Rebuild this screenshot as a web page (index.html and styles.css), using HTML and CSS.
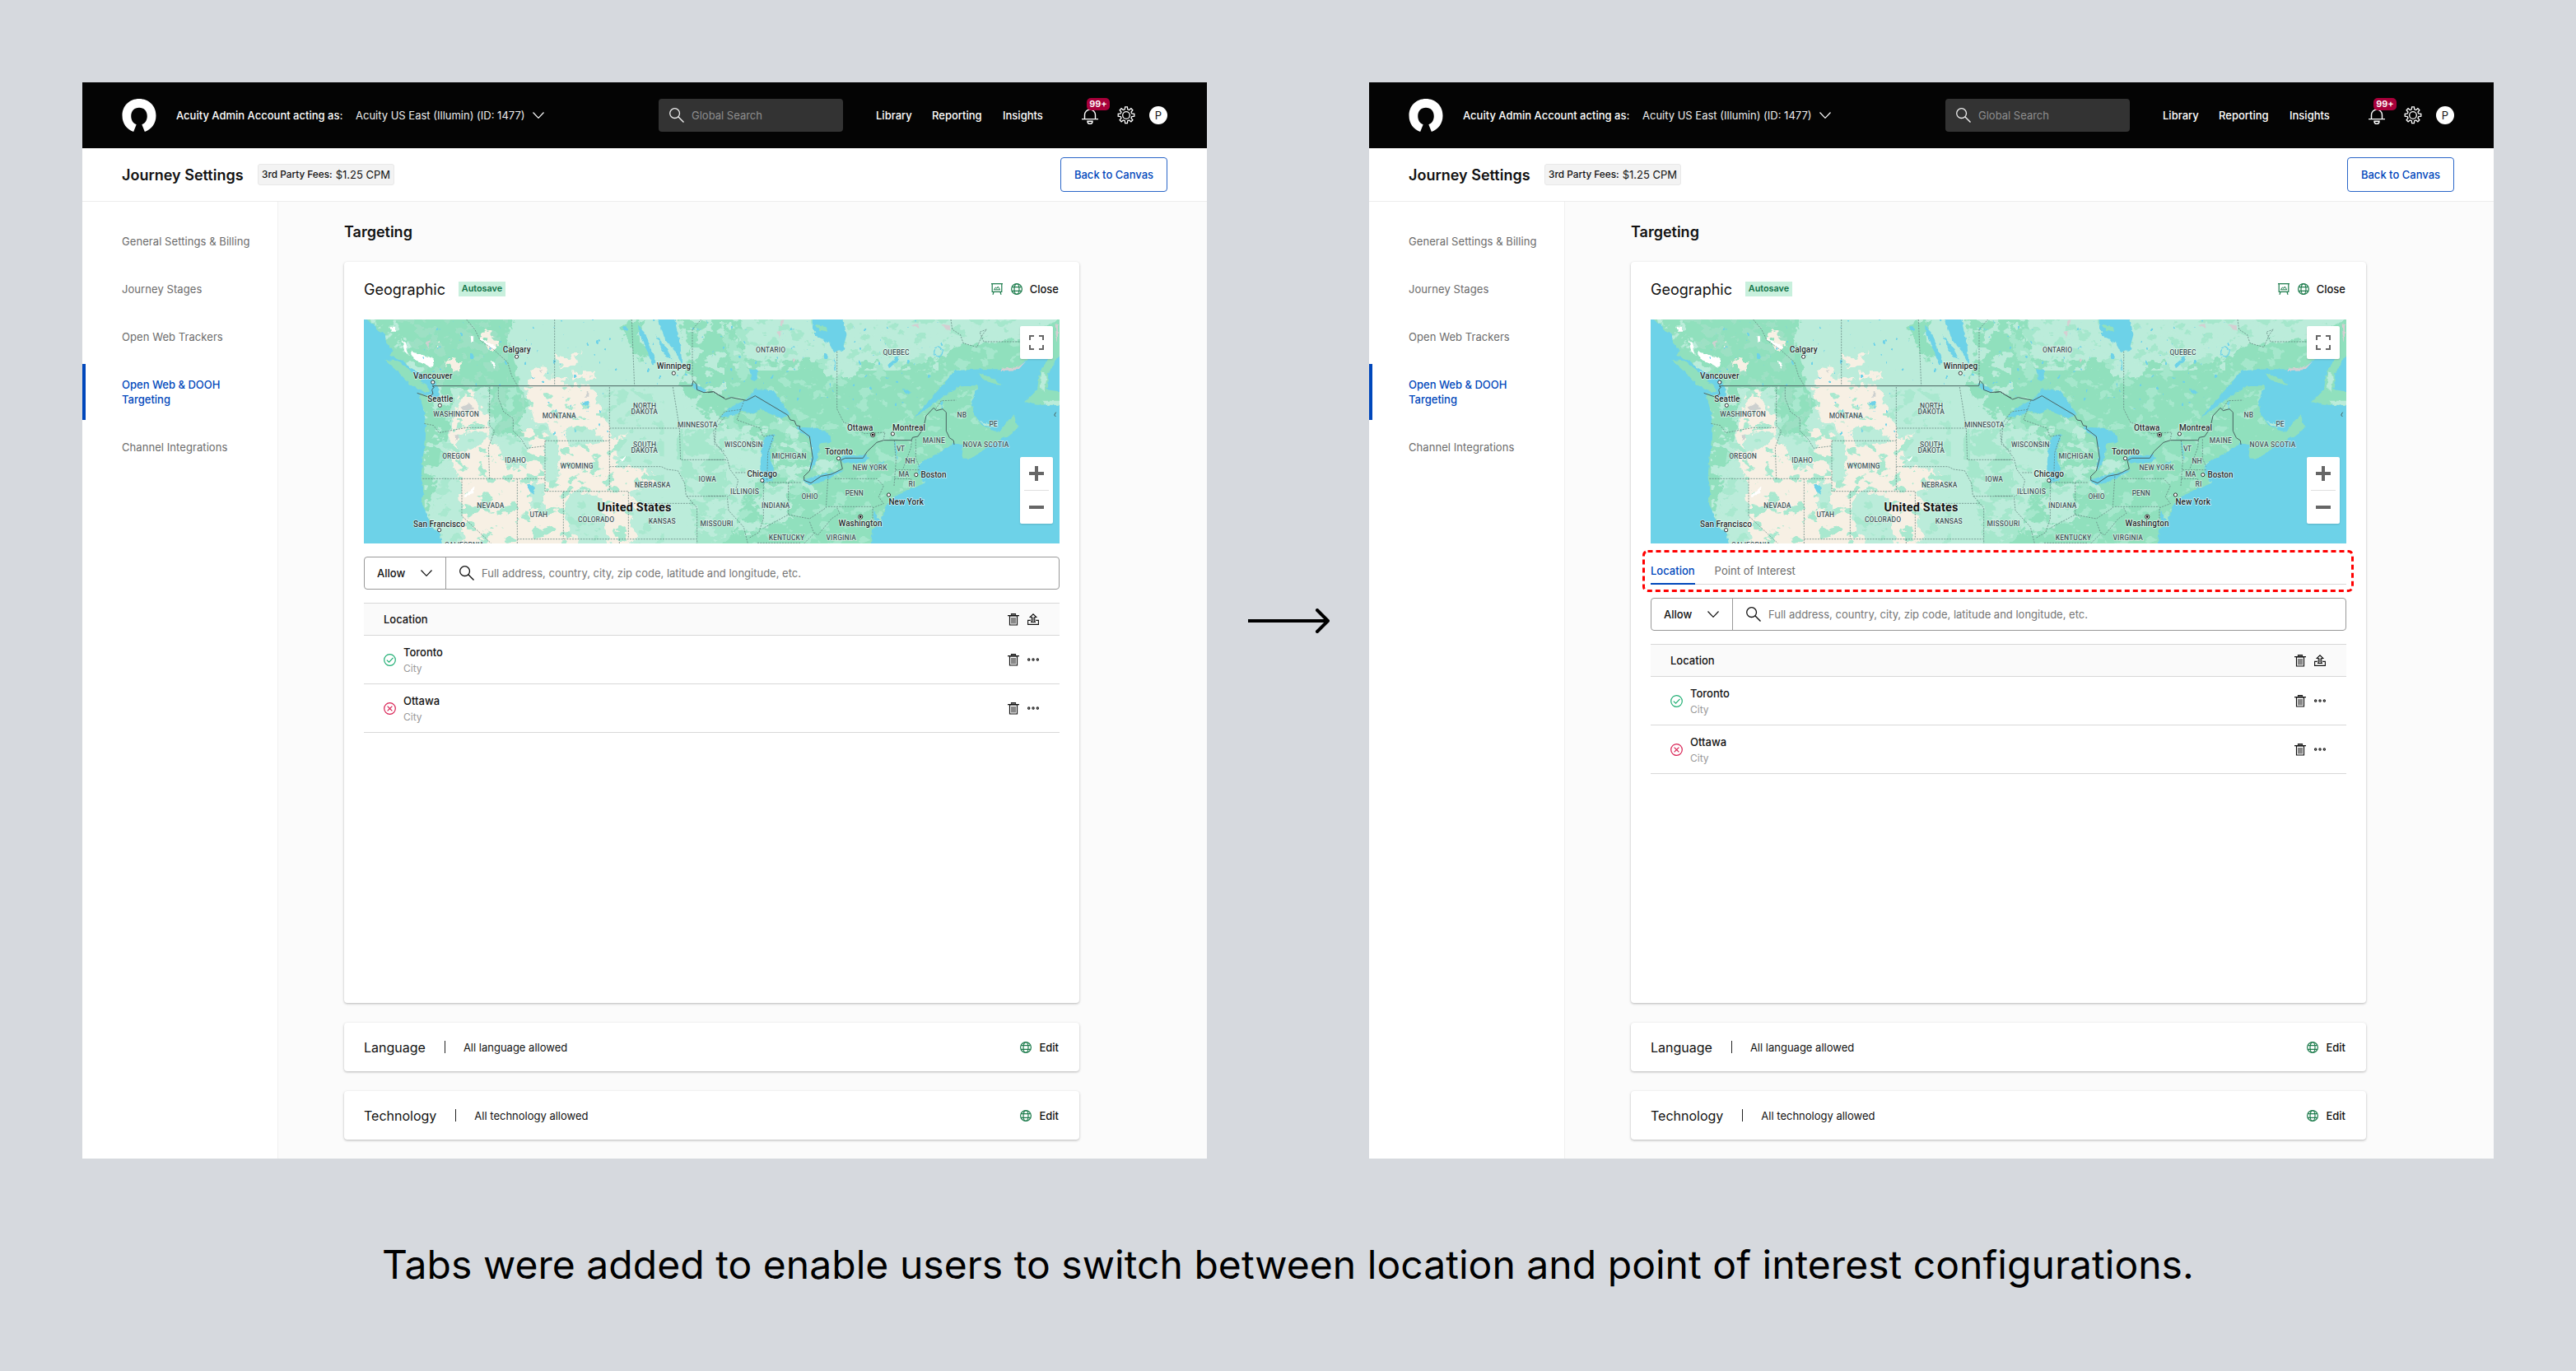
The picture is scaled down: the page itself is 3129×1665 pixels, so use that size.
FILE: index.html
```html
<!DOCTYPE html>
<html lang="en">
<head>
<meta charset="utf-8">
<title>Journey Settings – Targeting</title>
<link rel="stylesheet" href="styles.css">
</head>
<body>
<svg class="sprite" width="0" height="0" aria-hidden="true">
  <defs>
    <filter id="coast" x="-5%" y="-5%" width="110%" height="110%" color-interpolation-filters="sRGB">
      <feTurbulence type="fractalNoise" baseFrequency=".035" numOctaves="3" seed="4" result="n"/>
      <feDisplacementMap in="SourceGraphic" in2="n" scale="50" xChannelSelector="R" yChannelSelector="G"/>
    </filter>
    <filter id="shore" x="-5%" y="-5%" width="110%" height="110%" color-interpolation-filters="sRGB">
      <feTurbulence type="fractalNoise" baseFrequency=".06" numOctaves="2" seed="9" result="n"/>
      <feDisplacementMap in="SourceGraphic" in2="n" scale="14" xChannelSelector="R" yChannelSelector="G"/>
    </filter>
    <filter id="patchA" x="0" y="0" width="100%" height="100%" color-interpolation-filters="sRGB">
      <feTurbulence type="fractalNoise" baseFrequency=".018 .024" numOctaves="4" seed="7"/>
      <feColorMatrix values="0 0 0 0 0  0 0 0 0 0  0 0 0 0 0  24 0 0 0 -13.2" result="m"/>
      <feComposite in="SourceGraphic" in2="m" operator="in"/>
    </filter>
    <filter id="patchB" x="0" y="0" width="100%" height="100%" color-interpolation-filters="sRGB">
      <feTurbulence type="fractalNoise" baseFrequency=".02 .026" numOctaves="4" seed="21"/>
      <feColorMatrix values="0 0 0 0 0  0 0 0 0 0  0 0 0 0 0  24 0 0 0 -14.2" result="m"/>
      <feComposite in="SourceGraphic" in2="m" operator="in"/>
    </filter>
    <filter id="specks" x="0" y="0" width="100%" height="100%" color-interpolation-filters="sRGB">
      <feTurbulence type="fractalNoise" baseFrequency=".05 .04" numOctaves="2" seed="3"/>
      <feColorMatrix values="0 0 0 0 0  0 0 0 0 0  0 0 0 0 0  30 0 0 0 -22.4" result="m"/>
      <feComposite in="SourceGraphic" in2="m" operator="in"/>
    </filter>
  </defs>

  <symbol id="i-logo" viewBox="0 0 42 42"><path d="M14 41C5.500 38 0 30.500 0 21 0 8.500 9 0 21 0s21 8.500 21 21c0 9.500-5.500 17-14 20l-3.600-9C28.500 30.500 31 26.500 31 21.500c0-6.500-4-10.500-10-10.500s-10 4-10 10.500c0 5 2.500 9 6.600 10.500z" fill="#fff"/></symbol>
  <symbol id="i-chev" viewBox="0 0 14 8"><path d="M.5.5 7 7.300 13.500.5" fill="none" stroke="currentColor" stroke-width="1.200"/></symbol>
  <symbol id="i-search" viewBox="0 0 18 18"><circle cx="6.600" cy="6.600" r="5.900" fill="none" stroke="currentColor" stroke-width="1.300"/><path d="m10.800 10.800 6.700 6.700" stroke="currentColor" stroke-width="1.400"/></symbol>
  <symbol id="i-bell" viewBox="0 0 20 19"><path d="M0 12.600h20M3.500 12.500V7.500a6.500 6.500 0 0 1 13 0v5M7 15.200c0 4.200 6 4.200 6 0z" fill="none" stroke="currentColor" stroke-width="1.400"/></symbol>
  <symbol id="i-gear" viewBox="0 0 22 22"><g fill="none" stroke="currentColor" stroke-width="1.300"><circle cx="11" cy="11" r="4.300"/><path d="M9.300 3.800 9.600.8h2.800l.3 3 1.900.8 2.300-1.900 2 2L17 7.100l.8 1.900 3 .3v2.900l-3 .3-.8 1.900 1.900 2.400-2 2-2.300-1.900-1.900.8-.3 3H9.600l-.3-3-1.900-.8-2.300 1.900-2-2L5 14.400l-.8-1.900-3-.3V9.300l3-.3.8-1.900-1.900-2.400 2-2 2.300 1.900z"/></g></symbol>
  <symbol id="i-globe" viewBox="0 0 14 14"><g fill="none" stroke="#1f7d4e" stroke-width="1.200"><circle cx="7" cy="7" r="6.400"/><ellipse cx="7" cy="7" rx="3" ry="6.400"/><path d="M1.200 4.700h11.600M1.200 9.300h11.600"/></g></symbol>
  <symbol id="i-board" viewBox="0 0 14 14"><path d="M1.200.6h11.600v9.800H1.200zM0 .6h14M3 10.500 2 13.800M11 10.500l1 3.300" fill="none" stroke="#1f7d4e" stroke-width="1.200"/><path d="M3.400 7.800 5.400 5l1.500 1.300L8.300 4l2.400 3.800z" fill="none" stroke="#1f7d4e"/></symbol>
  <symbol id="i-trash" viewBox="0 0 14 15"><path d="M4 5h6v7.500H4z" fill="#888"/><path d="M0 2.600h14M4.500 2.300V.7h5v1.600M2.500 3v11h9V3" fill="none" stroke="#111" stroke-width="1.200"/><path d="M3 3.500h8M4.500 1.500h5" stroke="#777"/></symbol>
  <symbol id="i-upload" viewBox="0 0 14 14"><path d="M5.500 4.500h3v4.500h-3z" fill="#888"/><path d="M3.800 8.400H.6v5h12.800v-5h-3.200M4 10.400h6M5.200 10V4.500H3.200L7 .8l3.800 3.700H8.800V10" fill="none" stroke="#111" stroke-width="1.100"/></symbol>
  <symbol id="i-dots" viewBox="0 0 14 4"><g fill="none" stroke="#111" stroke-width="1.100"><circle cx="1.700" cy="2" r="1.150"/><circle cx="7" cy="2" r="1.150"/><circle cx="12.300" cy="2" r="1.150"/></g></symbol>
  <symbol id="i-ok" viewBox="0 0 15 15"><g fill="none" stroke="#1fae73" stroke-width="1.200"><circle cx="7.500" cy="7.500" r="6.800"/><path d="m3.800 7.600 2.700 2.600 5-5.400"/></g></symbol>
  <symbol id="i-no" viewBox="0 0 15 15"><g fill="none" stroke="#d81f52" stroke-width="1.200"><circle cx="7.500" cy="7.500" r="6.800"/><path d="m4.600 4.600 5.800 5.800m0-5.800-5.800 5.800"/></g></symbol>

  <symbol id="terrain" viewBox="0 0 845 272">
    <rect width="845" height="272" fill="#bbecda"/>
    <g transform="translate(-12 -18) scale(.33333)">
      <g filter="url(#coast)">
        <path fill="#90e0bd" d="M0 40H585L560 120 585 200 600 300 640 360 600 420 620 500 570 470 520 480 500 400 490 300 400 310 360 300 350 400 345 470 330 560 300 640 270 760 300 810 240 800 230 300z"/>
        <path fill="#90e0bd" d="M960 90 1010 54 1060 60 1030 110 1080 180 1040 210 1010 150zM1190 40H1420V420L1290 410 1220 360 1190 290 1220 200z"/>
        <path fill="#a5e7cc" d="M1180 460 1420 440V890H1250L1230 740 1190 600z"/>
        <path fill="#f7f0e4" d="M625 290H850L880 340 900 390 925 430 930 500 990 460 960 520 950 585 1060 600 1110 650 1000 680 1050 740 1000 760 1030 850 980 890 930 880 900 700 860 690 790 680 760 760 830 880 640 900 400 880 380 640 350 540 350 450 370 400 390 310 430 310 450 370 490 400 490 440 560 600 600 560 650 510 600 470 640 450 700 470 690 560 700 640 740 650 750 500 700 440 660 430 640 360z"/>
        <path fill="#f7f0e4" d="M735 180 790 190 830 170 800 215 750 235zM640 240 690 225 700 265 780 270 740 310 640 310zM790 250 880 255 870 270 800 272zM340 200 390 205 380 260 360 240zM300 140 320 150 325 190 300 170zM460 100 500 95 530 150 490 160z"/>
        <path fill="#bbecda" d="M640 640 700 650 690 760 650 740zM800 700 860 690 890 740 850 830 790 850 780 760zM500 480 590 500 640 600 560 590zM390 460 490 470 470 500 400 540 370 520zM760 460 840 440 920 500 800 520z"/>
        <path fill="#f7f0e4" d="M460 520 520 560 500 620 640 640 620 560 680 520 670 640 560 700 450 640z"/>
      </g>
      <g filter="url(#patchA)"><path fill="#bbecda" d="M60 54H560V300H120zM490 300H620V500H490zM250 300H350V870H260zM1200 54H1400V870H1200z"/></g>
      <g filter="url(#patchB)"><path fill="#a9e8cf" d="M350 300H1130V870H270L300 640z"/></g>
      <g filter="url(#patchA)"><path fill="#7fd3ad" fill-opacity=".5" d="M150 54H560V300H300L260 240zM480 300H620V480H500z"/></g>
      <g filter="url(#shore)">
        <path fill="#6dd2e8" d="M30 40 55 58 90 95 112 105 118 140 140 165 130 185 175 205 215 235 270 262 300 285 312 310 305 345 285 335 235 322 243 345 258 400 262 450 260 500 250 560 245 630 255 680 245 720 270 770 285 810 310 830 330 900H0V40z"/>
        <path fill="#90e0bd" d="M112 202 160 205 200 235 240 275 270 300 280 325 250 315 205 290 165 250z"/>
        <path fill="#6dd2e8" d="M1100 40H1165L1190 150 1195 220 1170 170 1135 130 1120 90zM1035 75 1060 100 1085 170 1100 210 1090 220 1060 150 1040 110zM1100 110 1140 160 1160 200 1130 180zM630 655 655 660 660 695 640 680zM830 355 858 350 850 365 830 365zM1230 285 1290 310 1270 320 1235 305z"/>
        <path fill="#fff" d="M175 125 190 150 200 185 185 175zM205 170 220 175 290 195 285 230 240 210 215 195zM130 80H150V98H135zM400 700 440 660 435 690zM460 120 520 155 500 160 465 130zM425 115H435V135H427zM500 205 515 210 508 235zM970 568 992 550 985 566z"/>
        <path fill="#cdd0cf" d="M262 135 280 130 268 160zM385 375 420 360 445 380 400 385zM845 315H856V335H846zM368 475H380V495H370zM675 240 688 238 682 250z"/>
      </g>
      <g filter="url(#specks)"><path fill="#6dd2e8" d="M150 54H560V300H320zM600 54H1350V300H600zM700 300H930V480H700z"/></g>
    </g>
    <g transform="translate(418 -18) scale(.33333)">
      <g filter="url(#coast)">
        <path fill="#90e0bd" d="M60 30 90 130 130 190 190 210 300 200 400 200 430 260 520 270 580 200 680 230 760 200 830 200 900 150 1000 140 1160 130 1310 30V300L1000 560 680 720 600 900 40 900 100 800 200 560 120 470 60 440 60 400z"/>
        <path fill="#bbecda" d="M60 450 120 450 140 470 190 540 190 640 130 700 100 830 70 760 60 600zM380 570 450 560 480 590 400 620zM200 660 290 650 300 780 200 800zM240 400 340 460 320 500 280 470z"/>
        <path fill="#a5e7cc" d="M640 450 760 400 700 440 660 490 620 490zM60 100 130 160 140 240 80 200z"/>
      </g>
      <g filter="url(#patchA)"><path fill="#bbecda" d="M90 54H840V240H90zM240 500H400V700H240z"/></g>
      <g filter="url(#patchB)"><path fill="#a5e7cc" d="M60 54H1270V600L560 870H60z"/></g>
      <g filter="url(#patchA)"><path fill="#bbecda" d="M60 440H220V870H60zM850 54H1160V130H850z"/></g>
      <g filter="url(#shore)">
        <path fill="#6dd2e8" d="M380 40H490L505 110 490 165 460 175 440 140 400 120 380 85z"/>
        <path fill="#90e0bd" d="M392 72 430 78 435 98 405 92z"/>
        <path fill="#6dd2e8" d="M45 410 90 370 140 345 170 310 235 312 265 350 300 400 270 415 220 395 190 380 160 400 130 385 90 405z"/>
        <path fill="#6dd2e8" d="M205 480 245 475 230 510 225 560 240 600 235 640 200 650 190 590 195 530z"/>
        <path fill="#6dd2e8" d="M320 445 400 450 440 470 450 500 410 505 395 570 370 610 382 540 370 485 335 465z"/>
        <path fill="#6dd2e8" d="M345 640 400 622 495 600 470 620 400 650 370 660zM480 565 500 548 575 548 590 560 565 575 500 578z"/>
        <path fill="#6dd2e8" d="M1310 170 1160 200 1125 235 1000 235 900 240 840 310 790 370 750 410 770 400 850 340 920 295 985 295 960 350 970 400 1000 440 1050 460 1040 470 990 465 960 490 925 510 895 505 860 530 800 560 770 580 765 610 790 650 730 675 665 700 690 690 650 730 630 790 600 820 590 900H1310z"/>
        <path fill="#90e0bd" d="M985 450 1060 465 1090 430 1115 400 1120 420 1130 450 1090 480 1030 510 960 560 925 560 930 510zM985 250 1020 262 1070 290 1040 288 1000 270zM1270 60 1310 60V365L1200 365 1155 355 1200 310 1210 240 1240 200 1250 150 1225 170 1170 190 1190 100z"/>
        <path fill="#6dd2e8" d="M1240 250 1310 130V320L1235 310z"/>
        <path fill="#bbecda" d="M990 425 1040 440 1060 432 1050 447 1010 440zM1215 240 1235 260 1225 320 1212 300zM1220 350H1300V365H1230z"/>
        <path fill="#6dd2e8" d="M655 220 700 180 690 205 660 232zM150 235 180 240 178 280 160 275zM600 745 610 760 625 790 618 800 605 775zM710 305 740 318 735 330 715 320z"/>
        <path fill="none" stroke="#6dd2e8" stroke-width="4" d="M838 155c-20 5-18 30 0 34 20-2 22-28 2-34M600 600 640 570M680 500 690 560M460 200 465 240"/>
        <path fill="#d5cfd2" d="M262 60 278 58 270 80zM250 100 266 95 260 122zM306 195 320 200 312 215zM740 72 770 70 768 86zM850 72 880 75 885 95 860 85zM1265 70 1275 72V140L1268 110zM1070 233 1130 228 1160 205 1130 238 1070 240z"/>
      </g>
      <g filter="url(#specks)"><path fill="#6dd2e8" d="M60 54H860V380H60z"/></g>
    </g>
    <g fill="none" stroke="#5f7f7a" stroke-width="2.200" stroke-dasharray="6 4" transform="translate(-12 -18) scale(.33333)">
      <path d="M410 54 440 90 460 130 510 165 560 210 575 260 595 294M731 54V296M1012 54 1022 296M1233 275V90L1265 54M494 300V440L512 460 490 520 494 634M526 300V340L545 390 580 415V460L610 490 630 523 694 515M256 433 290 440 310 467 345 460 410 448H494M250 634H696M696 496V680H1000V852M696 496H931M931 300V680M931 450H1186M931 590H1120L1140 600 1180 605 1205 650 1210 695 1250 740V852M1162 300 1175 380 1186 450 1190 565H1350M1212 698H1350M1000 724H1235M393 634V770L500 870M595 634V870M763 680V854M595 854H1250V870M967 854V870M1350 410 1310 460 1315 510 1350 535"/>
    </g>
    <g fill="none" stroke="#5f7f7a" stroke-width="2.200" stroke-dasharray="6 4" transform="translate(418 -18) scale(.33333)">
      <path d="M132 348 105 420 190 450 200 480 240 475 218 540 215 640M120 382 60 390 30 430 25 500 70 560 80 600 110 640 100 680 70 700 75 750 130 810 145 870M0 565H70M100 612H140M0 697H70M202 645V780L185 830 150 850M202 648H340M293 648V765L200 815M293 765 370 780 430 740 438 620M438 736H600M470 170V380L495 430 520 435 570 470 645 465 640 490M462 634H615L640 660 622 700 640 725 600 740V790M470 740 480 760 450 780 400 840 385 830 370 790M390 830 350 870M679 495 685 570 678 660M742 495 740 520 710 600M757 490V560L770 590M684 602H770M680 634H740V665M885 54 890 90 920 110 930 140 980 155 1000 110 1015 90 990 100 1005 135H1140M830 380 850 350 905 348M180 868H340"/>
    </g>
    <g fill="none" stroke="#49615f" stroke-width="3" transform="translate(-12 -18) scale(.33333)">
      <path d="M230 322 270 336 288 325 284 310 292 300 285 296H1232L1236 277 1248 290 1250 310 1275 320 1310 317 1330 330 1350 340"/>
    </g>
    <g fill="none" stroke="#49615f" stroke-width="3" transform="translate(418 -18) scale(.33333)">
      <path d="M0 320 20 317 40 330 65 345 85 338 140 349 172 332 290 402 300 420 315 423 322 440 335 443 333 452 370 480 382 560 370 606 350 625 350 640 375 650 412 625 450 618 490 598 483 567 500 559H565L580 535 615 502 640 494H742L745 484 765 480 775 465 785 450 795 405 822 376 832 386 855 380 868 392V460L880 485 895 495 897 510M1268 392 1262 402 1267 408"/>
    </g>
  </symbol>
</svg>

<main class="board">
  <div class="compare">
    <section class="panel">
      <header class="topbar">
        <svg class="logo"><use href="#i-logo"/></svg>
        <span class="acting">Acuity Admin Account acting as:</span>
        <span class="account">Acuity US East (Illumin) (ID: 1477)</span>
        <svg class="chev"><use href="#i-chev"/></svg>
        <div class="global-search"><svg class="search-icon"><use href="#i-search"/></svg><span>Global Search</span></div>
        <nav class="links"><a class="l1">Library</a><a class="l2">Reporting</a><a class="l3">Insights</a></nav>
        <div class="bell"><svg><use href="#i-bell"/></svg><span class="count">99+</span></div>
        <svg class="gear"><use href="#i-gear"/></svg>
        <span class="avatar">P</span>
      </header>
      <div class="subheader">
        <h1>Journey Settings</h1>
        <div class="fees"><b>3rd Party Fees:</b><span>$1.25 CPM</span></div>
        <a class="back">Back to Canvas</a>
      </div>
      <div class="body">
        <nav class="side">
          <a>General Settings &amp; Billing</a><a>Journey Stages</a><a>Open Web Trackers</a>
          <a class="active">Open Web &amp; DOOH<br>Targeting</a><a>Channel Integrations</a>
        </nav>
        <div class="content">
          <h2>Targeting</h2>
          <article class="card geo">
            <div class="geo-head">
              <h3>Geographic</h3><span class="autosave">Autosave</span>
              <svg class="ic14 push"><use href="#i-board"/></svg><svg class="ic14"><use href="#i-globe"/></svg><a>Close</a>
            </div>
            <div class="map">
              <svg class="map-art" viewBox="0 0 845 272"><use href="#terrain" width="845" height="272"/><g class="map-labels"></g></svg>
              <div class="full"><svg viewBox="0 0 18 18"><path d="M1 6V1h5M12 1h5v5M17 12v5h-5M6 17H1v-5" fill="none" stroke="#666" stroke-width="2"/></svg></div>
              <div class="zoomer"><svg viewBox="0 0 18 18"><path d="M0 9h18M9 0v18" stroke="#666" stroke-width="4"/></svg><i></i><svg viewBox="0 0 18 18"><path d="M0 9h18" stroke="#666" stroke-width="4"/></svg></div>
            </div>
            <div class="field">
              <div class="mode"><span>Allow</span><svg class="chev"><use href="#i-chev"/></svg></div>
              <svg class="search-icon"><use href="#i-search"/></svg><span class="ph">Full address, country, city, zip code, latitude and longitude, etc.</span>
            </div>
            <div class="table">
              <div class="thead"><span>Location</span><svg class="trash push"><use href="#i-trash"/></svg><svg class="ic14"><use href="#i-upload"/></svg></div>
              <div class="row"><svg class="state"><use href="#i-ok"/></svg><div class="place"><b>Toronto</b><small>City</small></div><svg class="trash push"><use href="#i-trash"/></svg><svg class="dots"><use href="#i-dots"/></svg></div>
              <div class="row"><svg class="state"><use href="#i-no"/></svg><div class="place"><b>Ottawa</b><small>City</small></div><svg class="trash push"><use href="#i-trash"/></svg><svg class="dots"><use href="#i-dots"/></svg></div>
            </div>
          </article>
          <article class="card mini"><h3>Language</h3><i></i><p>All language allowed</p><svg class="ic14 push"><use href="#i-globe"/></svg><a>Edit</a></article>
          <article class="card mini"><h3>Technology</h3><i></i><p>All technology allowed</p><svg class="ic14 push"><use href="#i-globe"/></svg><a>Edit</a></article>
        </div>
      </div>
    </section>

    <svg class="arrow" viewBox="0 0 100 30"><path d="M1 15h96" stroke="#000" stroke-width="4"/><path d="M85 2 98 15 85 28" fill="none" stroke="#000" stroke-width="4" stroke-linecap="round" stroke-linejoin="round"/></svg>

    <section class="panel">
      <header class="topbar">
        <svg class="logo"><use href="#i-logo"/></svg>
        <span class="acting">Acuity Admin Account acting as:</span>
        <span class="account">Acuity US East (Illumin) (ID: 1477)</span>
        <svg class="chev"><use href="#i-chev"/></svg>
        <div class="global-search"><svg class="search-icon"><use href="#i-search"/></svg><span>Global Search</span></div>
        <nav class="links"><a class="l1">Library</a><a class="l2">Reporting</a><a class="l3">Insights</a></nav>
        <div class="bell"><svg><use href="#i-bell"/></svg><span class="count">99+</span></div>
        <svg class="gear"><use href="#i-gear"/></svg>
        <span class="avatar">P</span>
      </header>
      <div class="subheader">
        <h1>Journey Settings</h1>
        <div class="fees"><b>3rd Party Fees:</b><span>$1.25 CPM</span></div>
        <a class="back">Back to Canvas</a>
      </div>
      <div class="body">
        <nav class="side">
          <a>General Settings &amp; Billing</a><a>Journey Stages</a><a>Open Web Trackers</a>
          <a class="active">Open Web &amp; DOOH<br>Targeting</a><a>Channel Integrations</a>
        </nav>
        <div class="content">
          <h2>Targeting</h2>
          <article class="card geo">
            <div class="geo-head">
              <h3>Geographic</h3><span class="autosave">Autosave</span>
              <svg class="ic14 push"><use href="#i-board"/></svg><svg class="ic14"><use href="#i-globe"/></svg><a>Close</a>
            </div>
            <div class="map">
              <svg class="map-art" viewBox="0 0 845 272"><use href="#terrain" width="845" height="272"/><g class="map-labels"></g></svg>
              <div class="full"><svg viewBox="0 0 18 18"><path d="M1 6V1h5M12 1h5v5M17 12v5h-5M6 17H1v-5" fill="none" stroke="#666" stroke-width="2"/></svg></div>
              <div class="zoomer"><svg viewBox="0 0 18 18"><path d="M0 9h18M9 0v18" stroke="#666" stroke-width="4"/></svg><i></i><svg viewBox="0 0 18 18"><path d="M0 9h18" stroke="#666" stroke-width="4"/></svg></div>
            </div>
            <div class="tabs">
              <a class="on">Location</a><a>Point of Interest</a>
              <svg class="callout" viewBox="0 0 864 51"><rect x="1.500" y="1.500" width="861" height="48" rx="5" fill="none" stroke="#f00" stroke-width="3" stroke-dasharray="6 4"/></svg>
            </div>
            <div class="field after-tabs">
              <div class="mode"><span>Allow</span><svg class="chev"><use href="#i-chev"/></svg></div>
              <svg class="search-icon"><use href="#i-search"/></svg><span class="ph">Full address, country, city, zip code, latitude and longitude, etc.</span>
            </div>
            <div class="table">
              <div class="thead"><span>Location</span><svg class="trash push"><use href="#i-trash"/></svg><svg class="ic14"><use href="#i-upload"/></svg></div>
              <div class="row"><svg class="state"><use href="#i-ok"/></svg><div class="place"><b>Toronto</b><small>City</small></div><svg class="trash push"><use href="#i-trash"/></svg><svg class="dots"><use href="#i-dots"/></svg></div>
              <div class="row"><svg class="state"><use href="#i-no"/></svg><div class="place"><b>Ottawa</b><small>City</small></div><svg class="trash push"><use href="#i-trash"/></svg><svg class="dots"><use href="#i-dots"/></svg></div>
            </div>
          </article>
          <article class="card mini"><h3>Language</h3><i></i><p>All language allowed</p><svg class="ic14 push"><use href="#i-globe"/></svg><a>Edit</a></article>
          <article class="card mini"><h3>Technology</h3><i></i><p>All technology allowed</p><svg class="ic14 push"><use href="#i-globe"/></svg><a>Edit</a></article>
        </div>
      </div>
    </section>
  </div>
  <p class="caption">Tabs were added to enable users to switch between location and point of interest configurations.</p>
</main>
<script src="script.js"></script>
</body>
</html>
```

FILE: script.js
```js
// Map labels: [text, left, baseline, width] in map pixels.
const states = [
  ["WASHINGTON", 84.3, 117.5, 55.5], ["OREGON", 95.3, 168.8, 33.5], ["IDAHO", 171.3, 173.5, 25.5], ["MONTANA", 216.7, 119.5, 41],
  ["NORTH", 327, 107.5, 28], ["DAKOTA", 324.5, 114.5, 32.5], ["SOUTH", 327, 154.5, 28], ["DAKOTA", 324.5, 161.5, 32.5],
  ["MINNESOTA", 381, 130.5, 48.5], ["WYOMING", 238.5, 181.3, 40], ["NEBRASKA", 329, 204.3, 43.5], ["IOWA", 406.5, 196.8, 21.5],
  ["NEVADA", 137.3, 229.3, 33], ["UTAH", 201.5, 239.6, 21.5], ["COLORADO", 260, 245.5, 44], ["KANSAS", 345.7, 248.3, 33],
  ["MISSOURI", 408.5, 251.3, 40], ["CALIFORNIA", 98, 276.5, 48],
  ["ONTARIO", 476, 39.8, 36], ["QUEBEC", 630.5, 42.8, 32], ["WISCONSIN", 438, 154.8, 46.5], ["MICHIGAN", 495.5, 168.8, 42],
  ["ILLINOIS", 445, 211.8, 35], ["INDIANA", 483, 228.8, 34.5], ["OHIO", 531.5, 217.5, 20], ["KENTUCKY", 491.7, 267.5, 43.5],
  ["NEW YORK", 593.5, 182.9, 42], ["PENN", 584.7, 213.8, 22], ["VIRGINIA", 561.5, 267.5, 36.5], ["VT", 647, 159.6, 10],
  ["NH", 657.5, 174.9, 12], ["MA", 649.5, 191.1, 13], ["RI", 661.5, 202.9, 8], ["MAINE", 678.7, 150.3, 27], ["NB", 720.5, 119.3, 11.5],
  ["PE", 759.5, 130.3, 10], ["NOVA SCOTIA", 727.5, 154.8, 56]
];
// City labels: [text, left, baseline, width, dot x, dot y, is capital].
const cities = [
  ["Calgary", 168.7, 40, 34, 185.6, 45.2], ["Vancouver", 60, 71.5, 47.5, 83.8, 76.2], ["Seattle", 77.3, 100, 31, 92.3, 104.3],
  ["Winnipeg", 355.7, 60, 41.5, 376.3, 65.2], ["San Francisco", 60, 251.7, 63, 91.6, 255.7],
  ["Ottawa", 587, 135, 31.5, 618.2, 140, 1], ["Montreal", 642, 134.6, 40, 642.4, 138.9],
  ["Toronto", 560, 163.6, 34, 576.5, 168.7], ["Chicago", 465.5, 190.5, 36.5, 483.8, 195.5],
  ["Boston", 676.5, 191.6, 31, 670.8, 188.6], ["New York", 637.5, 224.5, 42.5, 637.5, 213],
  ["Washington", 576.5, 250.8, 53, 603.2, 239.6, 1]
];

const NS = "http://www.w3.org/2000/svg";
function add(parent, tag, attrs, text) {
  const el = document.createElementNS(NS, tag);
  for (const k in attrs) el.setAttribute(k, attrs[k]);
  if (text) el.textContent = text;
  parent.appendChild(el);
}
document.querySelectorAll(".map-labels").forEach(g => {
  states.forEach(([t, x, y, w]) => add(g, "text", { class: "st", x, y, textLength: w }, t));
  cities.forEach(([t, x, y, w, cx, cy, capital]) => {
    add(g, "circle", { class: "dot", cx, cy, r: capital ? 2.6 : 2.1 });
    if (capital) add(g, "circle", { cx, cy, r: 1.3 });
    add(g, "text", { class: "city", x, y, textLength: w }, t);
  });
  add(g, "text", { class: "country", x: 283.5, y: 233, textLength: 90 }, "United States");
});
```

FILE: styles.css
```css
* { box-sizing: border-box; }
body { margin: 0; background: #d6d9de; font-family: Inter, "Liberation Sans", sans-serif; color: #111; }
h1, h2, h3, p { margin: 0; font-weight: 400; }
svg { display: block; flex: none; }
.sprite { position: absolute; }
.board { width: 3129px; height: 1665px; padding: 100px 100px 0; overflow: hidden; }
.compare { display: flex; justify-content: space-between; align-items: center; }
.panel { width: 1366px; height: 1307px; background: #fbfbfb; display: flex; flex-direction: column; overflow: hidden; }
.arrow { width: 100px; height: 30px; }
.caption { margin-top: 100px; font-size: 48px; line-height: 58px; letter-spacing: .04px; text-align: center; white-space: nowrap; color: #000; }

.topbar { height: 80px; flex: none; background: #040404; color: #fff; display: flex; align-items: center; padding: 0 48px; font-size: 13px; white-space: nowrap; }
.logo { width: 42px; height: 41px; margin-right: 24px; }
.acting { width: 218px; font-weight: 500; }
.account { width: 215px; color: #eee; }
.chev { width: 14px; height: 8px; }
.global-search { width: 224px; height: 40px; margin-left: 139px; border-radius: 4px; background: #333; color: #8e8e8e; display: flex; align-items: center; padding-left: 13px; gap: 9px; }
.search-icon { width: 18px; height: 18px; }
.global-search .search-icon { color: #eee; }
.links { display: flex; margin-left: 40px; font-weight: 500; }
.l1 { width: 68px; } .l2 { width: 86px; } .l3 { width: 96px; }
.bell { position: relative; width: 20px; }
.bell svg { width: 20px; height: 19px; margin-top: 3px; }
.count { position: absolute; left: 6px; top: -10px; width: 28px; height: 15px; border-radius: 5px; background: #a8003a; font-size: 11px; line-height: 15px; font-weight: 600; text-align: center; }
.gear { width: 22px; height: 22px; margin-left: 23px; }
.avatar { width: 22px; height: 22px; margin-left: 17px; border-radius: 50%; background: #fff; color: #111; font-size: 13px; line-height: 22px; text-align: center; }

.subheader { height: 65px; flex: none; background: #fff; border-bottom: 1px solid #ececec; display: flex; align-items: center; padding: 0 48px 0 48px; }
.subheader h1 { width: 165px; font-size: 18px; font-weight: 600; white-space: nowrap; }
.fees { width: 166px; height: 26px; border: 1px solid #e8e8e8; border-radius: 3px; background: #f3f3f3; display: flex; align-items: center; padding-left: 4px; gap: 4px; font-size: 11.8px; white-space: nowrap; }
.fees b { font-weight: 500; }
.fees span { font-size: 13px; }
.back { margin-left: auto; width: 130px; height: 42px; border: 1px solid #2a66c8; border-radius: 4px; font-size: 13px; font-weight: 500; line-height: 40px; text-align: center; color: #0047bb; white-space: nowrap; }

.body { flex: 1; display: flex; min-height: 0; }
.side { width: 238px; background: #fff; border-right: 1px solid #f0f0f0; padding-top: 23px; display: flex; flex-direction: column; gap: 8px; }
.side a { padding: 16px 0 16px 48px; font-size: 13px; line-height: 18px; letter-spacing: .07px; color: #6b6b6b; white-space: nowrap; }
.side .active { border-left: 4px solid #0047bb; padding-left: 44px; letter-spacing: 0; color: #0047bb; font-weight: 500; }
.content { width: 893px; margin-left: 80px; padding-top: 26px; }
.content h2 { font-size: 18px; line-height: 22px; font-weight: 600; margin-bottom: 25px; }
.card { background: #fff; border-radius: 4px; box-shadow: 0 1px 3px rgba(0,0,0,.28); margin-bottom: 24px; padding: 0 24px; }
.geo { height: 900px; padding-top: 20px; }
.geo-head { height: 26px; margin-bottom: 24px; padding-right: 1px; display: flex; align-items: center; font-size: 13px; }
.geo-head h3 { font-size: 18px; }
.autosave { margin-left: 16px; width: 57px; height: 18px; background: #c8f0dd; color: #0e7245; font-size: 10.8px; line-height: 17px; font-weight: 600; text-align: center; }
.ic14 { width: 14px; height: 14px; }
.push { margin-left: auto; }
.geo-head .ic14 + .ic14 { margin-left: 10px; }
.geo-head a, .mini a { margin-left: 9px; font-size: 13px; font-weight: 500; }
.map { position: relative; height: 272px; width: 845px; overflow: hidden; }
.map-art { width: 845px; height: 272px; font-family: Roboto, sans-serif; }
.map-labels text { paint-order: stroke; stroke-linejoin: round; }
.st { font-size: 8.5px; font-weight: 500; fill: #44565a; stroke: rgba(255,255,255,.6); stroke-width: 1.5px; }
.city { font-size: 10px; font-weight: 500; fill: #222b2b; stroke: rgba(255,255,255,.7); stroke-width: 1.5px; }
.country { font-size: 14.5px; font-weight: 700; fill: #111; stroke: rgba(255,255,255,.7); stroke-width: 1.5px; }
.dot { fill: #fff; stroke: #333; stroke-width: 1px; }
.full, .zoomer { position: absolute; right: 8px; width: 40px; background: #fff; border-radius: 2px; display: flex; flex-direction: column; align-items: center; justify-content: center; box-shadow: 0 1px 2px rgba(0,0,0,.15); }
.full { top: 8px; height: 40px; }
.zoomer { top: 167px; height: 81px; gap: 11px; }
.full svg, .zoomer svg { width: 18px; height: 18px; }
.zoomer i { width: 30px; height: 1px; background: #e0e0e0; }
.tabs { position: relative; width: 845px; height: 34px; margin-top: 16px; border-bottom: 1px solid #d8d8d8; display: flex; gap: 24px; font-size: 13px; line-height: 35px; color: #6b6b6b; }
.tabs a + a { letter-spacing: .06px; }
.tabs .on { color: #0047bb; font-weight: 500; border-bottom: 2px solid #0047bb; height: 34px; }
.callout { position: absolute; left: -10px; top: -8px; width: 864px; height: 51px; }
.field { width: 845px; height: 40px; margin-top: 16px; border: 1px solid #999; border-radius: 4px; display: flex; align-items: center; font-size: 13px; }
.mode { width: 99px; height: 38px; border-right: 1px solid #999; display: flex; align-items: center; justify-content: space-between; padding: 0 16px 0 15px; margin-right: 16px; font-weight: 500; }
.ph { margin-left: 9px; color: #757575; white-space: nowrap; }
.table { width: 845px; margin-top: 16px; font-size: 13px; border-top: 1px solid #d8d8d8; }
.thead { height: 39px; background: #fafafa; }
.thead, .row { display: flex; align-items: center; padding: 0 25px 0 24px; border-bottom: 1px solid #d8d8d8; font-weight: 500; }
.row { height: 59px; }
.trash { width: 14px; height: 15px; margin-right: 10px; }
.dots { width: 14px; height: 4px; }
.state { width: 15px; height: 15px; }
.place { margin-left: 9px; padding-top: 3px; display: flex; flex-direction: column; }
.place b { font-weight: 500; line-height: 18px; }
.place small { font-size: 12px; line-height: 21px; font-weight: 400; color: #999; }
.mini { height: 59px; padding-right: 25px; display: flex; align-items: center; font-size: 13px; }
.mini h3 { font-size: 16px; }
.mini i { width: 1px; height: 15px; background: #222; margin: 0 22px 0 23px; }
```
